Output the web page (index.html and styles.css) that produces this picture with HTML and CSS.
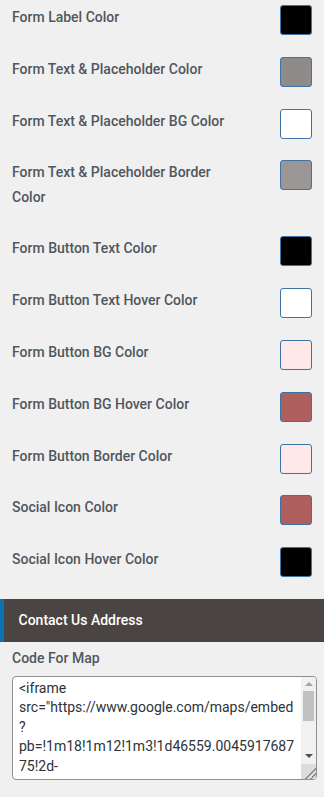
FILE: index.html
```html
<!DOCTYPE html>
<html lang="en">
<head>
<meta charset="utf-8">
<title>Customizer</title>
<link rel="stylesheet" href="styles.css">
</head>
<body>
<div class="panel">
  <div class="row"><span class="label">Form Label Color</span><span class="swatch" style="background:#000000"></span></div>
  <div class="row"><span class="label">Form Text &amp; Placeholder Color</span><span class="swatch" style="background:#8e8b8a"></span></div>
  <div class="row"><span class="label">Form Text &amp; Placeholder BG Color</span><span class="swatch" style="background:#ffffff"></span></div>
  <div class="row"><span class="label">Form Text &amp; Placeholder Border Color</span><span class="swatch" style="background:#9a9796"></span></div>
  <div class="row"><span class="label">Form Button Text Color</span><span class="swatch" style="background:#000000"></span></div>
  <div class="row"><span class="label">Form Button Text Hover Color</span><span class="swatch" style="background:#ffffff"></span></div>
  <div class="row"><span class="label">Form Button BG Color</span><span class="swatch" style="background:#ffe8e8"></span></div>
  <div class="row"><span class="label">Form Button BG Hover Color</span><span class="swatch" style="background:#b05f5f"></span></div>
  <div class="row"><span class="label">Form Button Border Color</span><span class="swatch" style="background:#ffe8e8"></span></div>
  <div class="row"><span class="label">Social Icon Color</span><span class="swatch" style="background:#b05f5f"></span></div>
  <div class="row"><span class="label">Social Icon Hover Color</span><span class="swatch" style="background:#000000"></span></div>
</div>
<div class="section-head">Contact Us Address</div>
<div class="field">
  <label class="field-label" for="map">Code For Map</label>
  <div class="code-box">
    <textarea id="map" class="code" wrap="off">&lt;iframe
src="https://www.google.com/maps/embed
?
pb=!1m18!1m12!1m3!1d46559.0045917687
75!2d-
74.00601505!3d40.71277500!2m3!1f0!2f0
!3f0!3m2!1i1024!2i768!4f13.1!3m3!1m2
!1s0x0%3A0x0!2zNDDCsDQyJzQ2LjAiTg!5e0
!3m2!1sen!2sus!4v1500000000000"
width="600" height="450"
style="border:0;" allowfullscreen=""
loading="lazy">&lt;/iframe></textarea>
    <div class="vscroll" aria-hidden="true">
      <div class="sb-btn"><span class="arrow-up"></span></div>
      <div class="sb-track"><div class="sb-thumb"></div></div>
      <div class="sb-btn sb-down"><span class="arrow-down"></span></div>
      <div class="sb-corner"></div>
    </div>
  </div>
</div>
</body>
</html>
```
FILE: styles.css
```css
html, body {
  margin: 0;
  padding: 0;
  background: #f0f0f1;
}
body {
  font-family: Roboto, "Noto Sans", "Liberation Sans", sans-serif;
  font-size: 14px;
}
.panel {
  padding: 5px 12px 0 12px;
}
.row {
  display: flex;
  align-items: flex-start;
  justify-content: space-between;
}
.label {
  max-width: 232px;
  line-height: 24.2px;
  padding-bottom: 27.6px;
  font-weight: 500;
  color: #50575e;
}
.swatch {
  flex: 0 0 auto;
  width: 30px;
  height: 28px;
  border: 1px solid #3f72a5;
  border-radius: 3px;
  box-sizing: content-box;
}
.section-head {
  height: 42.7px;
  box-sizing: border-box;
  display: flex;
  align-items: center;
  background: #4a4543;
  border-left: 4px solid #0a73b0;
  padding-left: 14.5px;
  color: #ffffff;
  font-weight: 500;
  font-size: 14px;
}
.field {
  padding: 4px 7px 0 12px;
}
.field-label {
  display: block;
  line-height: 24px;
  font-weight: 500;
  color: #50575e;
  margin-bottom: 6.3px;
}
.code-box {
  position: relative;
  width: 305px;
  height: 104px;
}
.code {
  display: block;
  box-sizing: border-box;
  width: 100%;
  height: 100%;
  margin: 0;
  padding: 2px 21px 2px 6px;
  border: 1px solid #8c8f94;
  border-radius: 4px;
  background: #ffffff;
  color: #2c3338;
  font-family: Roboto, "Noto Sans", "Liberation Sans", sans-serif;
  font-size: 14px;
  line-height: 19.5px;
  white-space: pre;
  overflow: hidden;
  resize: none;
}
.vscroll {
  position: absolute;
  top: 1px;
  right: 1px;
  bottom: 1px;
  width: 15px;
  display: flex;
  flex-direction: column;
  background: #f1f1f1;
  border-radius: 0 3px 3px 0;
  overflow: hidden;
}
.sb-btn {
  height: 14px;
  flex: 0 0 auto;
  display: flex;
  align-items: center;
  justify-content: center;
}
.sb-down {
  height: 15px;
}
.arrow-up {
  width: 0;
  height: 0;
  border-left: 4px solid transparent;
  border-right: 4px solid transparent;
  border-bottom: 4px solid #a3a3a3;
}
.arrow-down {
  width: 0;
  height: 0;
  border-left: 4px solid transparent;
  border-right: 4px solid transparent;
  border-top: 4px solid #505050;
}
.sb-track {
  flex: 1 1 auto;
  padding: 0 2px;
}
.sb-thumb {
  height: 30px;
  background: #c1c1c1;
}
.sb-corner {
  height: 15px;
  flex: 0 0 auto;
  background-color: #dcdcdc;
  background-image: linear-gradient(135deg, transparent 62%, #8a8a8a 62%, #8a8a8a 67%, transparent 67%, transparent 80%, #8a8a8a 80%, #8a8a8a 85%, transparent 85%);
}
```
